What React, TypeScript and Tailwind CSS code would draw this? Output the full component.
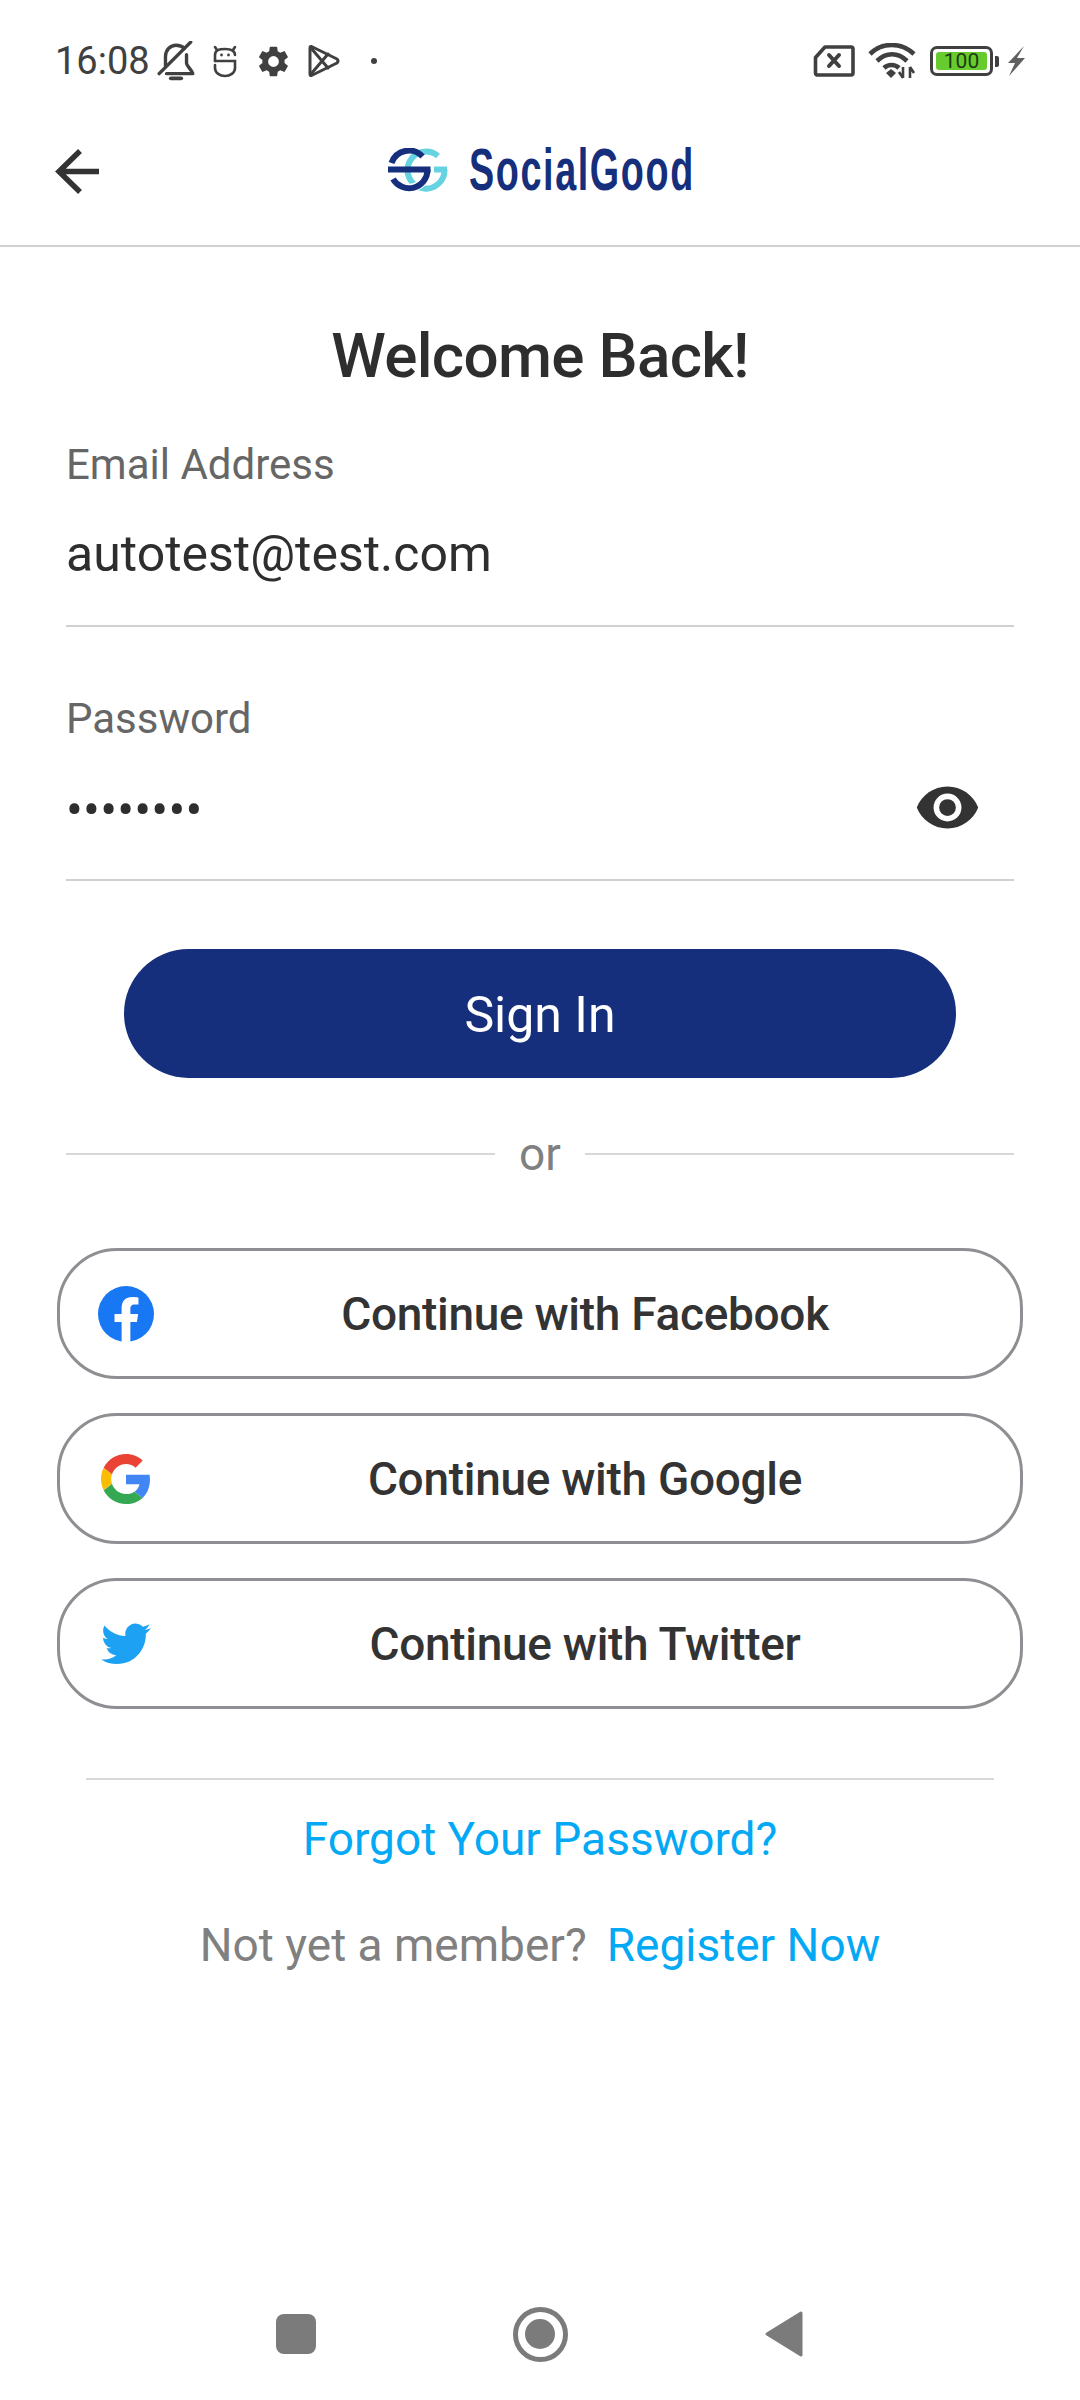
import React from "react";

const Bell = () => (
  <svg width="38" height="40" viewBox="0 0 36 38" fill="none" stroke="#404040" strokeWidth="3.2" strokeLinecap="round" strokeLinejoin="round">
    <path d="M8 24 V15 C8 8 13 4 18 4 C21 4 24 5 26 7" />
    <path d="M28 13 V21 C28 24 33 27 34 31 H9" />
    <path d="M2 31 L32 1" />
    <path d="M13 35.5 H23" strokeWidth="3.5" />
  </svg>
);
const Robot = () => (
  <svg width="26" height="34" viewBox="0 0 26 34" fill="none" stroke="#404040" strokeWidth="2.6" strokeLinecap="round">
    <path d="M3 3 L5 6 M23 3 L21 6" />
    <path d="M3 17 V11 C3 6 7 5 13 5 C19 5 23 6 23 11" />
    <path d="M3 17 H23 V24 C23 29 18 32 13 32 C8 32 3 29 3 24 V21" />
    <circle cx="9.5" cy="11" r="1.4" fill="#404040" stroke="none" />
    <circle cx="16.5" cy="11" r="1.4" fill="#404040" stroke="none" />
  </svg>
);
const Gear = () => (
  <svg width="37" height="37" viewBox="0 0 24 24" fill="#404040">
    <path d="M19.14 12.94a7.07 7.07 0 0 0 0-1.88l2.03-1.58a.5.5 0 0 0 .12-.64l-1.92-3.32a.5.5 0 0 0-.6-.22l-2.39.96a7 7 0 0 0-1.63-.94l-.36-2.54a.5.5 0 0 0-.5-.42h-3.84a.5.5 0 0 0-.49.42l-.36 2.54a7 7 0 0 0-1.63.94l-2.39-.96a.5.5 0 0 0-.6.22L2.66 8.84a.5.5 0 0 0 .12.64l2.03 1.58a7.07 7.07 0 0 0 0 1.88l-2.03 1.58a.5.5 0 0 0-.12.64l1.92 3.32c.12.22.38.3.6.22l2.39-.96c.5.38 1.05.7 1.63.94l.36 2.54c.05.24.25.42.49.42h3.84c.24 0 .45-.18.49-.42l.36-2.54a7 7 0 0 0 1.63-.94l2.39.96c.22.08.48 0 .6-.22l1.92-3.32a.5.5 0 0 0-.12-.64zM12 15.5a3.5 3.5 0 1 1 0-7 3.5 3.5 0 0 1 0 7z" />
  </svg>
);
const Play = () => (
  <svg width="32" height="34" viewBox="0 0 32 34" fill="none" stroke="#404040" strokeWidth="3" strokeLinejoin="round" strokeLinecap="round">
    <path d="M3.5 2.5 L29 15 Q31 17 29 19 L3.5 31.5 Q2 32 2 30 V4 Q2 2 3.5 2.5 Z" />
    <path d="M3 4 L20 24 M3 30 L20 10" />
  </svg>
);
const SimX = () => (
  <svg width="42" height="34" viewBox="0 0 42 34" fill="none" stroke="#404040" strokeWidth="3.6" strokeLinejoin="round" strokeLinecap="round">
    <path d="M2.5 13.5 L12 3 H38 Q40 3 40 5 V29 Q40 31 38 31 H5 Q2.5 31 2.5 29 Z" />
    <path d="M16 11 L26 22 M26 11 L16 22" strokeWidth="4" />
  </svg>
);
const Wifi = () => (
  <svg width="48" height="36" viewBox="0 0 48 36" fill="none">
    <g stroke="#404040" strokeWidth="4.6">
      <path d="M2 11 C14 -1 33 -1 46 11" />
      <path d="M9 18 C18 9 30 9 39 18" />
      <path d="M16 25 C20 21 27 21 31 25" />
    </g>
    <path d="M18 30 L23 26 L28 30 L23 35 Z" fill="#404040" />
    <path d="M35 24 V35 M31 29 L35 35 M42 24 V35 M42 24 L46 30" stroke="#404040" strokeWidth="2.6" />
  </svg>
);
const Battery = () => (
  <div className="flex items-center">
    <div className="flex h-[30px] w-[63px] items-center justify-center rounded-[7px] border-[3px] border-[#404040] p-[3px]">
      <div className="flex h-full w-full items-center justify-center rounded-[3px] bg-[#66cc2e] text-[21px] leading-none text-[#1f3a10]">100</div>
    </div>
    <div className="ml-[2px] h-[11px] w-[4px] rounded-r-[2px] bg-[#404040]" />
  </div>
);
const Bolt = () => (
  <svg width="20" height="30" viewBox="0 0 20 30" fill="#606060">
    <path d="M18 0 L2 17 H9 L3 30 L19 12 H11 Z" />
  </svg>
);

const Logo = () => (
  <svg width="60" height="44" viewBox="0 0 60 44" fill="none">
    <g stroke="#66d3e0" strokeWidth="6">
      <path d="M56.5 21.5 A18.5 18.5 0 1 1 50 8" />
      <path d="M59 21.5 H46" />
    </g>
    <g stroke="#ffffff" strokeWidth="8.5">
      <path d="M39.5 21.5 A18.5 18.5 0 0 1 21 40" />
    </g>
    <g stroke="#152f7c" strokeWidth="6">
      <path d="M34.5 8.5 A18.5 18.5 0 0 0 3.5 15" />
      <path d="M0 21.5 H42.5" />
      <path d="M39.5 21.5 A18.5 18.5 0 0 1 5 31" />
    </g>
  </svg>
);

const Eye = () => (
  <svg width="67" height="67" viewBox="0 0 24 24" fill="#333333">
    <path d="M12 4.5C7 4.5 2.73 7.61 1 12c1.73 4.39 6 7.5 11 7.5s9.27-3.11 11-7.5c-1.73-4.39-6-7.5-11-7.5zM12 17a5 5 0 1 1 0-10 5 5 0 0 1 0 10zm0-8a3 3 0 1 0 0 6 3 3 0 0 0 0-6z" />
  </svg>
);

const Facebook = () => (
  <svg width="56" height="56" viewBox="0 0 24 24">
    <circle cx="12" cy="12" r="12" fill="#1877f2" />
    <path fill="#fff" d="M16.67 15.47 17.2 12h-3.33V9.75c0-.95.47-1.87 1.96-1.87h1.51V4.92s-1.37-.23-2.69-.23c-2.74 0-4.53 1.66-4.53 4.67V12H7.08v3.47h3.04v8.39a12 12 0 0 0 3.75 0v-8.39z" />
  </svg>
);
const Google = () => (
  <svg width="50" height="50" viewBox="0 0 48 48">
    <path fill="#4285F4" d="M46.98 24.55c0-1.57-.15-3.09-.38-4.55H24v9.02h12.94c-.58 2.96-2.26 5.48-4.78 7.18l7.73 6c4.51-4.18 7.09-10.36 7.09-17.65z" />
    <path fill="#34A853" d="M24 48c6.48 0 11.93-2.13 15.89-5.81l-7.73-6c-2.15 1.45-4.92 2.3-8.16 2.3-6.26 0-11.57-4.22-13.47-9.91l-7.98 6.19C6.51 42.62 14.62 48 24 48z" />
    <path fill="#FBBC05" d="M10.53 28.59c-.48-1.45-.76-2.99-.76-4.59s.27-3.14.76-4.59l-7.98-6.19C.92 16.46 0 20.12 0 24c0 3.88.92 7.54 2.56 10.78l7.97-6.19z" />
    <path fill="#EA4335" d="M24 9.5c3.54 0 6.71 1.22 9.21 3.6l6.85-6.85C35.9 2.38 30.47 0 24 0 14.62 0 6.51 5.38 2.56 13.22l7.98 6.19C12.43 13.72 17.74 9.5 24 9.5z" />
  </svg>
);
const Twitter = () => (
  <svg width="50" height="41" viewBox="0 0 24 19.75">
    <path fill="#1da1f2" d="M23.95 2.57a10 10 0 0 1-2.82.77 4.96 4.96 0 0 0 2.16-2.72c-.95.56-2.01.96-3.13 1.19a4.92 4.92 0 0 0-8.38 4.48C7.69 6.09 4.07 4.13 1.64 1.16a4.82 4.82 0 0 0-.67 2.48c0 1.71.87 3.21 2.19 4.1a4.9 4.9 0 0 1-2.23-.62v.06a4.92 4.92 0 0 0 3.95 4.83 5 5 0 0 1-2.21.08 4.94 4.94 0 0 0 4.6 3.42A9.87 9.87 0 0 1 0 17.54a14 14 0 0 0 7.55 2.21c9.05 0 14-7.5 14-13.99 0-.21 0-.42-.02-.63a9.9 9.9 0 0 0 2.46-2.55z" />
  </svg>
);

const Social = ({ icon, label }: { icon: React.ReactNode; label: string }) => (
  <div className="relative flex h-[131px] items-center justify-center rounded-[60px] border-[3px] border-[#8e8e93] pl-[90px]">
    <div className="absolute left-[38px] top-0 bottom-0 flex w-[56px] items-center justify-center">{icon}</div>
    <span className="pt-[2px] text-[46px] font-medium tracking-[-0.3px] text-[#333333]">{label}</span>
  </div>
);

export default function App() {
  return (
    <div className="flex h-[2400px] w-[1080px] flex-col bg-white font-['Roboto',sans-serif]">
      <div className="flex h-[120px] items-center justify-between pl-[55px] pr-[54px] pt-[2px]">
        <div className="flex items-center">
          <span className="text-[38px] leading-none text-[#404040]">16:08</span>
          <div className="ml-[7px]"><Bell /></div>
          <div className="ml-[17px]"><Robot /></div>
          <div className="ml-[17px]"><Gear /></div>
          <div className="ml-[16px]"><Play /></div>
          <div className="ml-[31px] h-[6px] w-[6px] rounded-full bg-[#404040]" />
        </div>
        <div className="flex items-center">
          <SimX />
          <div className="ml-[13px] mr-[14px]"><Wifi /></div>
          <Battery />
          <div className="ml-[7px]"><Bolt /></div>
        </div>
      </div>

      <div className="relative flex h-[127px] items-center justify-center border-b-2 border-[#d0d0d0]">
        <svg className="absolute left-[55px] top-[29px]" width="44" height="46" viewBox="0 0 44 46" fill="none" stroke="#333333" strokeWidth="5.5">
          <path d="M44 22.5 H4 M25 2 L4 22.5 L25 43" />
        </svg>
        <div className="flex items-center gap-[21px] pb-[26px]">
          <Logo />
          <span className="w-[224px] origin-left whitespace-nowrap font-['Liberation_Sans',sans-serif] text-[59px] font-bold leading-[44px] tracking-[2.5px] text-[#152f7c] [transform:scaleX(0.64)]">SocialGood</span>
        </div>
      </div>

      <main className="flex flex-col px-[66px]">
        <h1 className="mt-[74px] text-center text-[62px] font-medium leading-[70px] tracking-[-0.7px] text-[#2e2e2e]">Welcome Back!</h1>

        <label className="mt-[50px] text-[42px] leading-[48px] text-[#666666]">Email Address</label>
        <div className="mt-[14px] flex h-[124px] items-start border-b-2 border-[#d0d0d0] pt-[21px]">
          <span className="text-[50px] leading-[60px] text-[#2e2e2e]">autotest@test.com</span>
        </div>

        <label className="mt-[68px] text-[42px] leading-[48px] text-[#666666]">Password</label>
        <div className="relative mt-[14px] flex h-[124px] items-start border-b-2 border-[#d0d0d0] pt-[23px]">
          <span className="text-[50px] leading-[60px] tracking-[0.2px] text-[#2e2e2e]">••••••••</span>
          <div className="absolute right-[33px] top-[17px]"><Eye /></div>
        </div>

        <button className="mx-[58px] mt-[68px] flex h-[129px] items-center justify-center rounded-[65px] bg-[#152f7c] pt-[4px] text-[50px] text-white">Sign In</button>

        <div className="mt-[53px] flex items-center">
          <div className="h-[2px] flex-1 bg-[#d8d8d8]" />
          <span className="mx-[24px] text-[46px] leading-[46px] text-[#808080]">or</span>
          <div className="h-[2px] flex-1 bg-[#d8d8d8]" />
        </div>

        <div className="-mx-[9px] mt-[71px] flex flex-col gap-[34px]">
          <Social icon={<Facebook />} label="Continue with Facebook" />
          <Social icon={<Google />} label="Continue with Google" />
          <Social icon={<Twitter />} label="Continue with Twitter" />
        </div>

        <div className="mx-[20px] mt-[69px] h-[2px] bg-[#d8d8d8]" />

        <a className="mt-[31px] text-center text-[46px] leading-[56px] text-[#03a9f4]">Forgot Your Password?</a>
        <p className="mt-[50px] text-center text-[46px] leading-[56px] text-[#808080]">
          Not yet a member?<span className="ml-[20px] text-[#03a9f4]">Register Now</span>
        </p>
      </main>

      <div className="mt-auto mb-[31px] flex h-[70px] items-center justify-center">
        <div className="h-[40px] w-[40px] rounded-[8px] bg-[#7b7b7b]" />
        <div className="ml-[197px] flex h-[55px] w-[55px] items-center justify-center rounded-full border-[5px] border-[#7b7b7b]">
          <div className="h-[30px] w-[30px] rounded-full bg-[#7b7b7b]" />
        </div>
        <svg className="ml-[195px]" width="42" height="48" viewBox="0 0 42 48" fill="#7b7b7b" stroke="#7b7b7b" strokeWidth="3" strokeLinejoin="round">
          <path d="M38 3 L4 24 L38 45 Z" />
        </svg>
      </div>
    </div>
  );
}
